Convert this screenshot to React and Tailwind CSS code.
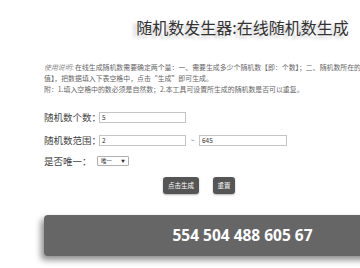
export default function App() {
  const cjk = { fontFamily: '"Noto Sans CJK SC", "Noto Sans", sans-serif' };
  return (
    <div className="w-[360px] h-[268px] overflow-hidden bg-white relative" style={cjk}>
      <div className="w-[397px] ml-[44px]">
        <h1 className="pt-[17px] text-center text-[16px] leading-[20px] text-[#333] font-normal whitespace-nowrap [text-shadow:-4px_3px_3px_#cfcfcf]">
          随机数发生器:在线随机数生成
        </h1>
        <div className="mt-[25px] text-[6.9px] leading-[11px] text-[#666] whitespace-nowrap">
          <div>
            <span className="italic text-[#888]">使用说明:</span> 在线生成随机数需要确定两个量：一、需要生成多少个随机数【即：个数】；二、随机数所在的范围【最小值~最大
          </div>
          <div>值】，把数据填入下表空格中，点击“生成”即可生成。</div>
          <div>附：1.填入空格中的数必须是自然数；2.本工具可设置所生成的随机数是否可以重复。</div>
        </div>
        <div className="mt-[17px] flex items-center h-[11px]">
          <span className="w-[55px] text-[9.5px] leading-[11px] text-[#444] whitespace-nowrap">随机数个数：</span>
          <div className="w-[87px] h-[11px] border border-[#c4c4c4] bg-white text-[6.5px] leading-[9px] pl-[2px] text-[#333]">5</div>
        </div>
        <div className="mt-[12px] flex items-center h-[11px]">
          <span className="w-[55px] text-[9.5px] leading-[11px] text-[#444] whitespace-nowrap">随机数范围：</span>
          <div className="w-[87px] h-[11px] border border-[#c4c4c4] bg-white text-[6.5px] leading-[9px] pl-[2px] text-[#333]">2</div>
          <span className="w-[13px] text-center text-[7px] text-[#777] leading-[11px]">~</span>
          <div className="w-[88px] h-[11px] border border-[#c4c4c4] bg-white text-[6.5px] leading-[9px] pl-[2px] text-[#333]">645</div>
        </div>
        <div className="mt-[10px] flex items-center h-[10px]">
          <span className="w-[53px] text-[9.5px] leading-[11px] text-[#444] whitespace-nowrap">是否唯一：</span>
          <div className="w-[32px] h-[10px] border border-[#b0b0b0] bg-white rounded-[1px] flex items-center justify-between pl-[3px] pr-[3px] text-[5.5px] leading-[8px] text-[#333]">
            <span>唯一</span>
            <span className="text-[4px]">▼</span>
          </div>
        </div>
        <div className="mt-[11px] flex ml-[119px] gap-[14px]">
          <div className="w-[36px] h-[17px] rounded-[3px] bg-[#555] text-white text-[6.5px] flex items-center justify-center shadow-[0_1px_2px_rgba(0,0,0,0.3)]">点击生成</div>
          <div className="w-[22px] h-[17px] rounded-[3px] bg-[#555] text-white text-[6.5px] flex items-center justify-center shadow-[0_1px_2px_rgba(0,0,0,0.3)]">重置</div>
        </div>
        <div className="mt-[21px] h-[41px] rounded-[4px] bg-[#666] shadow-[-3px_4px_6px_rgba(0,0,0,0.45)] flex items-center justify-center">
          <span className="text-white font-bold text-[15.5px] whitespace-nowrap" style={{ fontFamily: '"Open Sans", sans-serif' }}>
            554 504 488 605 67
          </span>
        </div>
      </div>
    </div>
  );
}
